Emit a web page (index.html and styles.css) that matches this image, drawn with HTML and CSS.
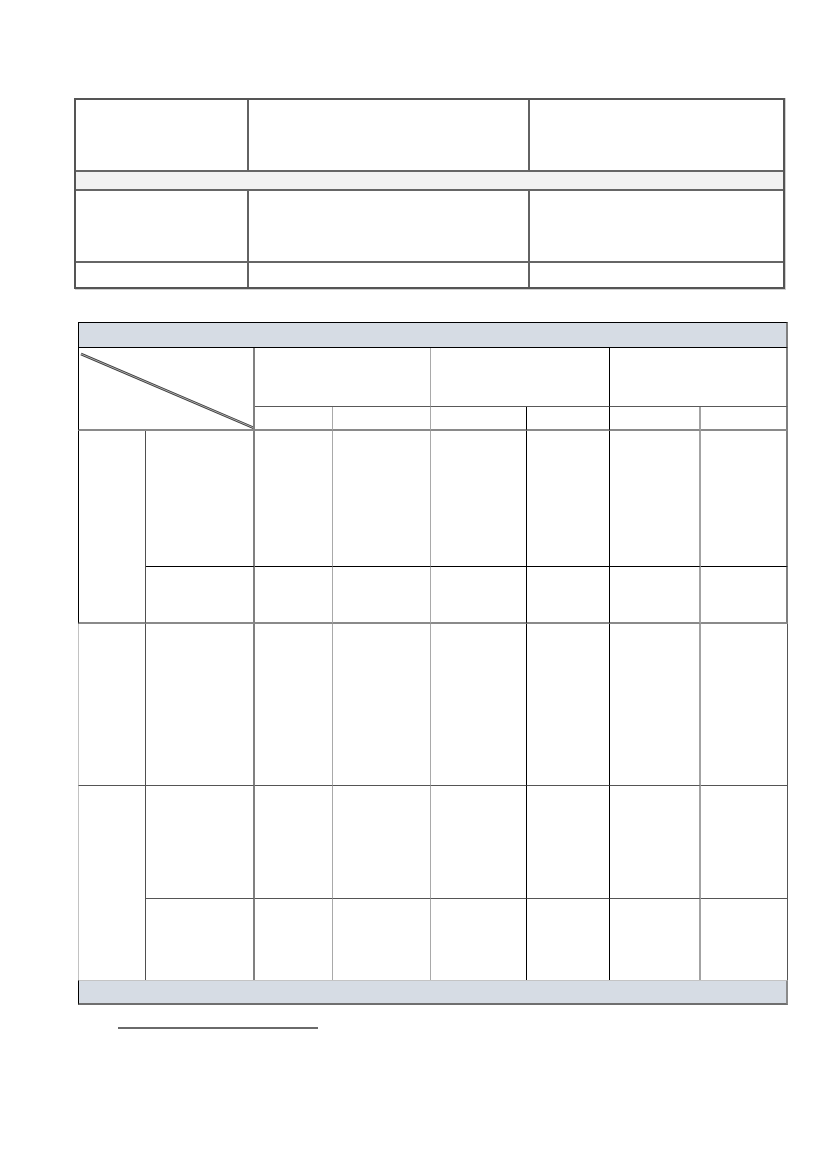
FILE: index.html
```html
<!DOCTYPE html>
<html lang="en">
<head>
<meta charset="utf-8">
<title>Tables</title>
<link rel="stylesheet" href="styles.css">
</head>
<body>
<div class="page">
  <div class="t1">
    <div class="c1 r1"></div><div class="c1 r1"></div><div class="c1-last r1"></div>
    <div class="band r1"></div>
    <div class="c1 r1"></div><div class="c1 r1"></div><div class="c1-last r1"></div>
    <div class="c1"></div><div class="c1"></div><div class="c1-last"></div>
  </div>

  <div class="t2">
    <div class="title"></div>

    <div class="diag">
      <svg class="diag-svg" width="174" height="81" viewBox="0 0 174 81">
        <line x1="2" y1="6" x2="175" y2="80" stroke="#3a3a3a" stroke-width="2.6"/>
        <line x1="2" y1="6" x2="175" y2="80" stroke="#ffffff" stroke-width="0.6"/>
      </svg>
    </div>
    <div class="head e4"></div>
    <div class="head e6"></div>
    <div class="head e8t"></div>

    <div class="sub e3"></div><div class="sub e4"></div>
    <div class="sub e5"></div><div class="sub e6"></div>
    <div class="sub e7"></div><div class="sub e8t"></div>

    <!-- group 1 -->
    <div class="lab g1lab e1"></div>
    <div class="g1a e2"></div>
    <div class="g1a e3"></div><div class="g1a e4"></div><div class="g1a e5"></div>
    <div class="g1a e6"></div><div class="g1a e7"></div><div class="g1a e8t"></div>
    <div class="g1b e2"></div>
    <div class="g1b e3"></div><div class="g1b e4"></div><div class="g1b e5"></div>
    <div class="g1b e6"></div><div class="g1b e7"></div><div class="g1b e8t"></div>

    <!-- group 2 -->
    <div class="lab1 g2 e1"></div>
    <div class="g2 e2"></div>
    <div class="g2 e3"></div><div class="g2 e4"></div><div class="g2 e5"></div>
    <div class="g2 e6"></div><div class="g2 e7"></div><div class="g2 e8"></div>

    <!-- group 3 -->
    <div class="lab g3lab e1"></div>
    <div class="g3a e2"></div>
    <div class="g3a e3"></div><div class="g3a e4"></div><div class="g3a e5"></div>
    <div class="g3a e6"></div><div class="g3a e7"></div><div class="g3a e8"></div>
    <div class="g3b e2"></div>
    <div class="g3b e3"></div><div class="g3b e4"></div><div class="g3b e5"></div>
    <div class="g3b e6"></div><div class="g3b e7"></div><div class="g3b e8"></div>

    <div class="foot"></div>
  </div>

  <div class="footnote-rule"></div>
</div>
</body>
</html>
```

FILE: styles.css
```css
html, body {
  margin: 0;
  padding: 0;
  background: #ffffff;
  font-family: "Liberation Sans", Arial, sans-serif;
}

.page {
  padding: 98px 0 0 74px;
}

/* ---------- table 1 ---------- */
.t1 {
  display: grid;
  grid-template-columns: 173px 281px 253px;
  grid-template-rows: 72px 19px 72px 24px;
  width: 707px;
  border: 2px solid #555555;
  box-shadow: 1px 0 0 #cfcfcf, 1px 1px 0 #cfcfcf;
}

.t1 .c1 {
  border-right: 2px solid #626262;
}

.t1 .r1 {
  border-bottom: 2px solid #666666;
}

.t1 .band {
  grid-column: 1 / span 3;
  background: #f2f2f2;
}

/* ---------- table 2 ---------- */
.t2 {
  display: grid;
  grid-template-columns: 68px 109px 78px 98px 96px 83px 91px 87px;
  grid-template-rows: 26px 59px 24px 136px 57px 162px 113px 81px 25px;
  width: 710px;
  margin: 33px 0 0 4px;
}

.t2 .title {
  grid-column: 1 / span 8;
  background: #d6dce4;
  border-top: 1px solid #000000;
  border-left: 1px solid #000000;
  border-right: 2px solid #7f7f7f;
  border-bottom: 1px solid #000000;
}

.t2 .diag {
  grid-column: span 2;
  grid-row: span 2;
  border-left: 1px solid #000000;
  border-right: 2px solid #808080;
  border-bottom: 2px solid #8a8a8a;
}

.diag-svg {
  display: block;
}

.t2 .head {
  grid-column: span 2;
  border-bottom: 1px solid #595959;
}

.t2 .sub {
  border-bottom: 2px solid #8a8a8a;
}

/* right borders by grid line */
.e1 { border-right: 1px solid #4f4f4f; }
.e2 { border-right: 2px solid #808080; }
.e3 { border-right: 1px solid #a9a9a9; }
.e4 { border-right: 1px solid #a9a9a9; }
.e5 { border-right: 1px solid #000000; }
.e6 { border-right: 1px solid #000000; }
.e7 { border-right: 2px solid #a3a3a3; }
.e8 { border-right: 1px solid #555555; }
.e8t { border-right: 2px solid #7f7f7f; }

/* group rows */
.t2 .lab {
  grid-row: span 2;
}

.t2 .g1lab {
  border-left: 1px solid #000000;
  border-bottom: 2px solid #8a8a8a;
}

.t2 .g1a {
  border-bottom: 1px solid #000000;
}

.t2 .g1b {
  border-bottom: 2px solid #8a8a8a;
}

.t2 .lab1 {
  border-left: 1px solid #c2c2c2;
}

.t2 .g2 {
  border-bottom: 1px solid #555555;
}

.t2 .g3lab {
  border-left: 1px solid #c2c2c2;
}

.t2 .g3a {
  border-bottom: 1px solid #555555;
}

.t2 .foot {
  grid-column: 1 / span 8;
  background: #d6dce4;
  border-top: 1px solid #c4c4c4;
  border-left: 1px solid #000000;
  border-right: 2px solid #8a8a8a;
  border-bottom: 2px solid #6f6f6f;
}

.footnote-rule {
  width: 200px;
  height: 2px;
  background: #6a6a6a;
  margin: 22px 0 0 44px;
}
```
